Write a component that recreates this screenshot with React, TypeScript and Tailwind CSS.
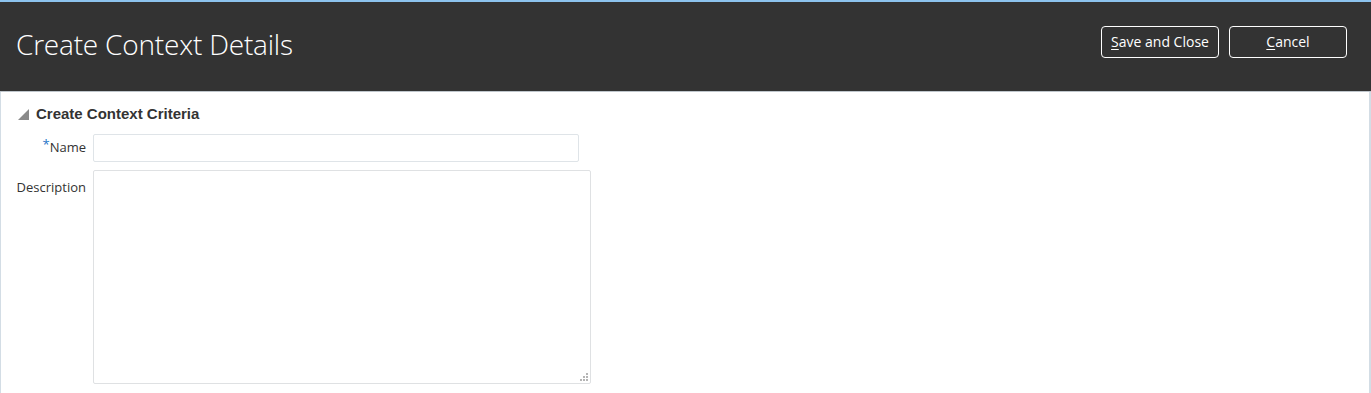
import React from 'react';

const font = { fontFamily: '"Segoe UI", "Open Sans", "Noto Sans", sans-serif' };

function HeaderButton({ accessKey, rest }: { accessKey: string; rest: string }) {
    return (
        <button className="w-[118px] h-[32px] rounded-[4px] border border-white text-white text-[14px] leading-none flex items-center justify-center">
            <span>
                <span className="underline underline-offset-2">{accessKey}</span>
                {rest}
            </span>
        </button>
    );
}

export default function App() {
    return (
        <div className="w-[1371px] h-[393px] overflow-hidden bg-white flex flex-col" style={font}>
            {/* Top accent */}
            <div className="h-[2px] bg-[#8cc3ee]" />

            {/* Page header */}
            <div className="h-[90px] bg-[#333333] flex items-center justify-between pl-4 pr-[24px] border-b border-[#bfc6cc]">
                <h1 className="text-[28px] font-light text-white tracking-[-0.2px] mt-[-6px]">Create Context Details</h1>
                <div className="flex gap-[10px] mt-[-10px]">
                    <HeaderButton accessKey="S" rest="ave and Close" />
                    <HeaderButton accessKey="C" rest="ancel" />
                </div>
            </div>

            {/* Body */}
            <div className="flex-1 border-l border-r-2 border-[#d3dde5] pt-[12px]">
                {/* Section header */}
                <div className="flex items-center gap-[7px] pl-[17px] h-[20px]">
                    <svg width="11" height="11" viewBox="0 0 10 10">
                        <polygon points="10,0 10,10 0,10" fill="#8a8a8a" />
                    </svg>
                    <span className="text-[15px] font-bold text-[#333333]" style={{ fontFamily: '"Liberation Sans", Arial, sans-serif' }}>
                        Create Context Criteria
                    </span>
                </div>

                {/* Form */}
                <div className="mt-[10px] flex flex-col gap-[8px] text-[13px] text-[#333333]">
                    <div className="flex items-center">
                        <label className="w-[85px] text-right">
                            <span className="text-[#1f76c7] relative top-[-3px]">*</span>Name
                        </label>
                        <input className="ml-[7px] w-[486px] h-[28px] border border-[#dfe4e8] rounded-[2px] outline-none px-2" />
                    </div>
                    <div className="flex items-start">
                        <label className="w-[85px] text-right mt-[8px] leading-[18px]">Description</label>
                        <div className="ml-[7px] w-[498px] h-[214px] border border-[#dfe1e3] rounded-[2px] relative">
                            <svg className="absolute right-[2px] bottom-[2px]" width="8" height="8" viewBox="0 0 8 8">
                                <rect x="6" y="0" width="2" height="2" fill="#b5b5b5" />
                                <rect x="3" y="3" width="2" height="2" fill="#b5b5b5" />
                                <rect x="6" y="3" width="2" height="2" fill="#b5b5b5" />
                                <rect x="0" y="6" width="2" height="2" fill="#b5b5b5" />
                                <rect x="3" y="6" width="2" height="2" fill="#b5b5b5" />
                                <rect x="6" y="6" width="2" height="2" fill="#b5b5b5" />
                            </svg>
                        </div>
                    </div>
                </div>
            </div>
        </div>
    );
}
